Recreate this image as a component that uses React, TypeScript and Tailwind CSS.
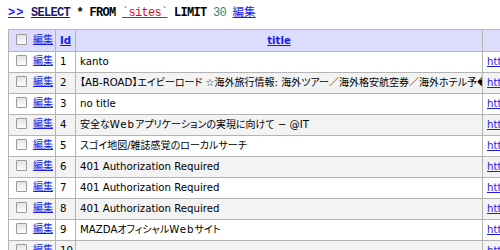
import React from "react";

const rows: { id: number; title: string }[] = [
  { id: 1, title: "kanto" },
  { id: 2, title: "【AB-ROAD】エイビーロード ☆海外旅行情報: 海外ツアー／海外格安航空券／海外ホテル予\uFFFD" },
  { id: 3, title: "no title" },
  { id: 4, title: "安全なWebアプリケーションの実現に向けて − @IT" },
  { id: 5, title: "スゴイ地図/雑誌感覚のローカルサーチ" },
  { id: 6, title: "401 Authorization Required" },
  { id: 7, title: "401 Authorization Required" },
  { id: 8, title: "401 Authorization Required" },
  { id: 9, title: "MAZDAオフィシャルWebサイト" },
  { id: 10, title: "" },
];

const cjkRe = /([\u2600-\u26ff\u3000-\u30ff\u4e00-\u9fff\uff00-\uffef]+|Web)/;

function Mixed({ text }: { text: string }) {
  const parts = text.split(cjkRe).filter((p) => p.length > 0);
  return (
    <>
      {parts.map((p, i) =>
        p === "Web" ? (
          <span key={i} className="tracking-[1px]">
            {p}
          </span>
        ) : cjkRe.test(p) ? (
          <span key={i} className="text-[10px]" style={{ fontFeatureSettings: '"palt"' }}>
            {p}
          </span>
        ) : (
          <span key={i}>{p}</span>
        )
      )}
    </>
  );
}

function Box() {
  return (
    <span className="inline-block w-[11px] h-[11px] border border-[#9a9a9a] bg-gradient-to-b from-[#e4e4e4] to-[#fdfdfd] align-middle rounded-[1px]" />
  );
}

const cell = "border border-[#b4b4b4] p-0 whitespace-nowrap overflow-hidden";

export default function App() {
  return (
    <div
      className="w-[500px] h-[250px] overflow-hidden bg-white text-black"
      style={{ fontFamily: '"DejaVu Sans", "Noto Sans CJK JP", sans-serif' }}
    >
      <div
        className="pl-[8px] pt-[5px] h-[29px] text-[12px] leading-[16px] whitespace-nowrap tracking-[-0.7px] font-bold"
        style={{ fontFamily: '"Liberation Mono", "Noto Sans CJK JP", monospace' }}
      >
        <a className="text-[#1a1aee] underline tracking-[1px]">&gt;&gt;</a>{" "}
        <a className="text-[#1a1a6e] underline">SELECT</a> * FROM{" "}
        <span className="text-[#e01010] underline font-normal">`sites`</span> LIMIT{" "}
        <span className="text-[#1a8a7a] font-normal">30</span>{" "}
        <a className="text-[#1a1aee] underline font-normal tracking-normal text-[11.5px]">編集</a>
      </div>
      <table className="ml-[8px] border-collapse table-fixed w-[560px] text-[10.2px]">
        <colgroup>
          <col className="w-[47px]" />
          <col className="w-[20px]" />
          <col className="w-[407px]" />
          <col className="w-[86px]" />
        </colgroup>
        <thead>
          <tr className="bg-[#dcdcfc] h-[22px]">
            <th className={cell + " text-left pl-[7px]"}>
              <span className="inline-flex items-center gap-[6px]">
                <Box />
                <a className="text-[#1a1aee] underline font-normal text-[10px]">編集</a>
              </span>
            </th>
            <th className={cell + " text-left pl-[4px]"}>
              <a className="text-[#1a1aee] underline font-bold">Id</a>
            </th>
            <th className={cell + " text-center"}>
              <a className="text-[#1a1aee] underline font-bold">title</a>
            </th>
            <th className={cell} />
          </tr>
        </thead>
        <tbody>
          {rows.map((r) => (
            <tr key={r.id} className={"h-[21px] " + (r.id % 2 === 0 ? "bg-[#f3f3f3]" : "bg-white")}>
              <td className={cell + " pl-[7px]"}>
                <span className="inline-flex items-center gap-[6px]">
                  <Box />
                  <a className="text-[#1a1aee] underline text-[10px]">編集</a>
                </span>
              </td>
              <td className={cell + " pl-[4px]"}>{r.id}</td>
              <td className={cell + " pl-[4px]"}>
                <Mixed text={r.title} />
              </td>
              <td className={cell + " pl-[4px]"}>
                <a className="text-[#1a1aee] underline">http://</a>
              </td>
            </tr>
          ))}
        </tbody>
      </table>
    </div>
  );
}
